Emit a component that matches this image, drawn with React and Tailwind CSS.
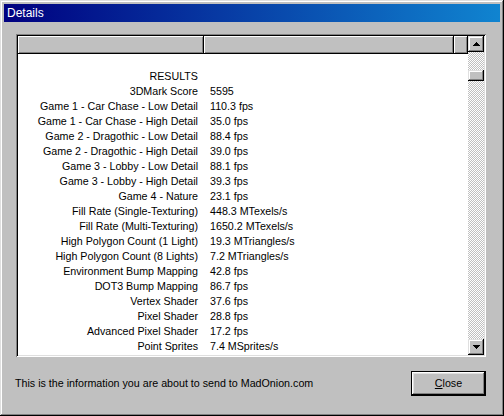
import React from "react";

const rows = [
  ["", ""],
  ["RESULTS", ""],
  ["3DMark Score", "5595"],
  ["Game 1 - Car Chase - Low Detail", "110.3 fps"],
  ["Game 1 - Car Chase - High Detail", "35.0 fps"],
  ["Game 2 - Dragothic - Low Detail", "88.4 fps"],
  ["Game 2 - Dragothic - High Detail", "39.0 fps"],
  ["Game 3 - Lobby - Low Detail", "88.1 fps"],
  ["Game 3 - Lobby - High Detail", "39.3 fps"],
  ["Game 4 - Nature", "23.1 fps"],
  ["Fill Rate (Single-Texturing)", "448.3 MTexels/s"],
  ["Fill Rate (Multi-Texturing)", "1650.2 MTexels/s"],
  ["High Polygon Count (1 Light)", "19.3 MTriangles/s"],
  ["High Polygon Count (8 Lights)", "7.2 MTriangles/s"],
  ["Environment Bump Mapping", "42.8 fps"],
  ["DOT3 Bump Mapping", "86.7 fps"],
  ["Vertex Shader", "37.6 fps"],
  ["Pixel Shader", "28.8 fps"],
  ["Advanced Pixel Shader", "17.2 fps"],
  ["Point Sprites", "7.4 MSprites/s"],
];

const raised =
  "shadow-[inset_-1px_-1px_#000,inset_1px_1px_#dfdfdf,inset_-2px_-2px_#808080,inset_2px_2px_#fff]";

function Arrow({ down }) {
  return (
    <svg width="7" height="4" viewBox="0 0 7 4" className="block">
      {down ? (
        <path d="M0 0H7L3.5 4Z" fill="#000" shapeRendering="crispEdges" />
      ) : (
        <path d="M3.5 0L7 4H0Z" fill="#000" shapeRendering="crispEdges" />
      )}
    </svg>
  );
}

export default function App() {
  return (
    <div
      className="w-[504px] h-[416px] bg-[#c0c0c0] p-[4px] flex flex-col shadow-[inset_-1px_-1px_#000,inset_1px_1px_#dfdfdf,inset_-2px_-2px_#808080,inset_2px_2px_#fff] text-black"
      style={{ fontFamily: '"Liberation Sans", Arial, sans-serif' }}
    >
      <div className="h-[18px] flex items-center pl-[3px] bg-[linear-gradient(to_right,#000080,#1084d0)] text-white text-[12px] leading-none">
        Details
      </div>

      <div className="mt-[12px] ml-[12px] w-[470px] h-[323px] p-[2px] bg-white shadow-[inset_1px_1px_#808080,inset_-1px_-1px_#fff,inset_2px_2px_#000,inset_-2px_-2px_#dfdfdf] flex">
        <div className="w-[450px] flex flex-col overflow-hidden">
          <div className="h-[18px] flex shrink-0">
            <div className="w-[186px] h-full bg-[#c0c0c0] shadow-[inset_-1px_-1px_#000,inset_1px_1px_#fff,inset_-2px_-2px_#808080]" />
            <div className="w-[250px] h-full bg-[#c0c0c0] shadow-[inset_-1px_-1px_#000,inset_1px_1px_#fff,inset_-2px_-2px_#808080]" />
            <div className="w-[14px] h-full bg-[#c0c0c0] shadow-[inset_-1px_-1px_#000,inset_1px_1px_#fff,inset_-2px_-2px_#808080]" />
          </div>
          <div className="flex flex-col text-[10.7px] leading-none">
            {rows.map(([a, b], i) => (
              <div key={i} className="h-[15px] flex items-center shrink-0">
                <div className="w-[186px] text-right pr-[6px] whitespace-nowrap">{a}</div>
                <div className="pl-[6px] whitespace-nowrap">{b}</div>
              </div>
            ))}
          </div>
        </div>
        <div className="w-[16px] flex flex-col bg-[repeating-conic-gradient(#c0c0c0_0_25%,#fff_0_50%)] bg-[length:2px_2px]">
          <div className={`h-[16px] bg-[#c0c0c0] flex items-center justify-center ${raised}`}>
            <Arrow />
          </div>
          <div className="h-[18px]" />
          <div className={`h-[11px] bg-[#c0c0c0] ${raised}`} />
          <div className="flex-1" />
          <div className={`h-[16px] bg-[#c0c0c0] flex items-center justify-center ${raised}`}>
            <Arrow down />
          </div>
        </div>
      </div>

      <div className="mt-[14px] flex items-center">
        <div className="flex-1 pl-[11px] text-[10.7px] leading-none whitespace-nowrap">
          This is the information you are about to send to MadOnion.com
        </div>
        <div className="mr-[14px] w-[75px] h-[25px] border border-black bg-[#c0c0c0] shadow-[inset_-1px_-1px_#000,inset_1px_1px_#fff,inset_-2px_-2px_#808080,inset_2px_2px_#dfdfdf] flex items-center justify-center text-[10.7px] leading-none">
          <span>
            <span className="underline">C</span>lose
          </span>
        </div>
      </div>
    </div>
  );
}
